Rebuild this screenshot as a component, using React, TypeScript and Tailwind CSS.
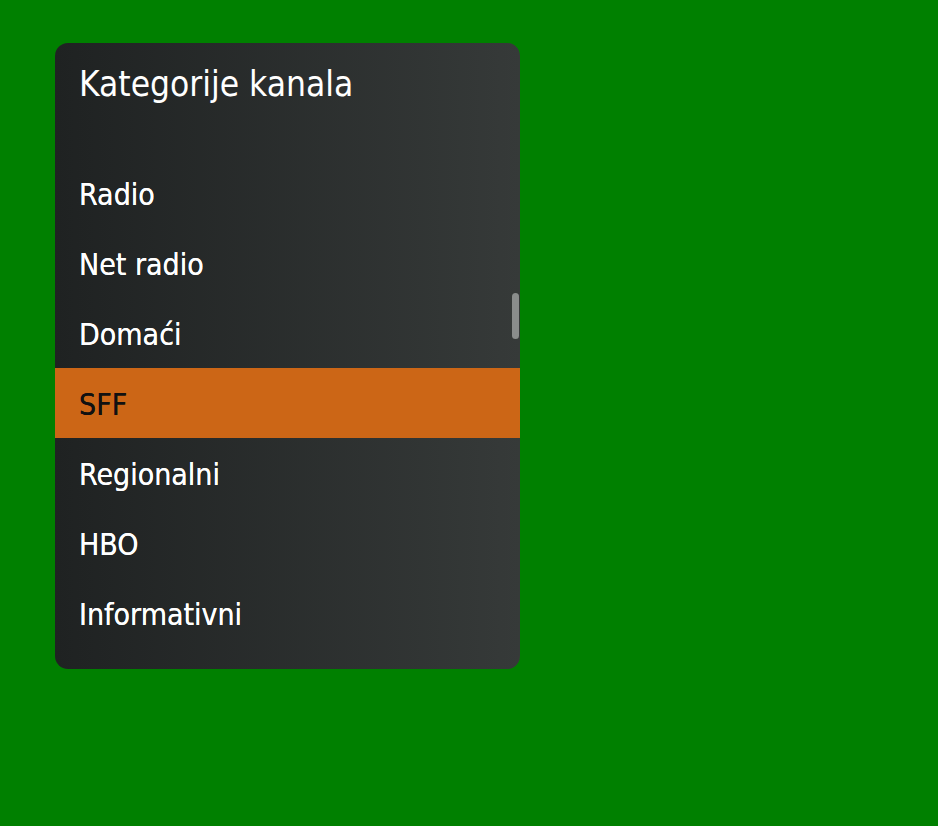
import React from "react";

const items = ["Radio", "Net radio", "Domaći", "SFF", "Regionalni", "HBO", "Informativni"];

export default function App() {
  return (
    <div className="w-[938px] h-[826px] bg-[#008000] pt-[43px] pl-[55px]" style={{ fontFamily: '"DejaVu Sans Condensed", "DejaVu Sans", sans-serif' }}>
      <div className="relative w-[465px] h-[626px] rounded-[13px] overflow-hidden bg-gradient-to-r from-[#1f2222] to-[#363a39] flex flex-col">
        <div className="h-[115px] pl-[24px] pt-[19px] text-[35px] leading-[44px] text-white">Kategorije kanala</div>
        <div className="flex flex-col">
          {items.map((it) => (
            <div
              key={it}
              className={
                "h-[70px] flex items-center pl-[24px] pt-[3px] text-[30px] [text-shadow:0_0_0.6px_currentColor] " +
                (it === "SFF" ? "bg-[#cc6616] text-[#111]" : "text-white")
              }
            >
              {it}
            </div>
          ))}
        </div>
        <div className="absolute right-[1px] top-[250px] w-[7px] h-[46px] rounded-full bg-[#8a8d8c]" />
      </div>
    </div>
  );
}
